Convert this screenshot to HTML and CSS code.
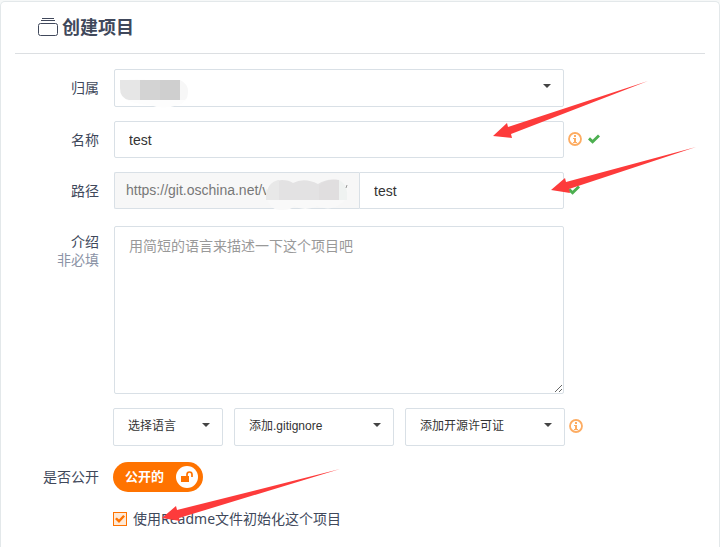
FILE: index.html
```html
<!DOCTYPE html>
<html lang="zh-CN">
<head>
  <meta charset="UTF-8" />
  <meta name="viewport" content="width=device-width, initial-scale=1.0"/>
  <title>创建项目</title>
  <link rel="stylesheet" href="styles.css">
</head>
<body>

  <!-- Shared icons -->
  <svg class="sprite" aria-hidden="true">
    <symbol id="icon-info" viewBox="0 0 14 14">
      <circle cx="7" cy="7" r="6" fill="none" stroke="currentColor" stroke-width="1.8"/>
      <path d="M6 3h2v2H6zM5 6h3v4h1v1H5v-1h1V7H5z" fill="currentColor"/>
    </symbol>
    <symbol id="icon-check" viewBox="0 0 12 10">
      <path d="M0 5.4L2 3.3l2.6 2.5L10 0.4l2 2L4.6 9.8z" fill="currentColor"/>
    </symbol>
  </svg>

  <main class="panel">
    <header class="panel-header">
      <svg class="title-icon" viewBox="0 0 20 19" aria-hidden="true">
        <path d="M4 .5h12M3 2.5h14" fill="none" stroke="currentColor"/>
        <rect x=".5" y="5.5" width="19" height="12" rx="2" fill="none" stroke="currentColor"/>
      </svg>
      <h1>创建项目</h1>
    </header>

    <form class="project-form">
      <div class="row">
        <label class="row-label" for="owner">归属</label>
        <div class="field select-box">
          <select id="owner" class="control">
            <option></option>
          </select>
          <svg class="mask mask-owner" viewBox="0 0 72 30" aria-hidden="true">
            <path d="M4 4C12-1 28 2 46 3Q68 6 70 16Q68 25 60 27Q45 32 32 27Q6 25 3 16Q0 8 4 4z" fill="#fdfdfd"/>
            <path d="M2 2h20v20H11Q2 20 2 10z" fill="#e6e6e6"/>
            <path d="M22 2h20v20H22z" fill="#d3d3d3"/>
            <path d="M42 2h20v20H42z" fill="#cfcfcf"/>
            <path d="M62 2q8 4 8 11t-3 9h-5z" fill="#f7f7f7"/>
          </svg>
        </div>
      </div>

      <div class="row">
        <label class="row-label" for="name">名称</label>
        <div class="field">
          <input type="text" id="name" class="control" value="test" />
        </div>
        <div class="hints">
          <svg class="icon-info"><use href="#icon-info"/></svg>
          <svg class="icon-check"><use href="#icon-check"/></svg>
        </div>
      </div>

      <div class="row">
        <label class="row-label" for="path">路径</label>
        <div class="field path-group">
          <span class="path-prefix">https://git.oschina.net/v
            <svg class="mask mask-path" viewBox="0 0 84 32" aria-hidden="true">
              <path d="M1 13Q2 31 16 31Q27 31 29 27Q40 33 52 27Q66 33 77 24Q84 18 82 8H2z" fill="#f9f9f9"/>
              <path d="M1 21Q1 2 17 1Q24 1 28 4Q39-2 53 5Q62-1 74 1V21H1z" fill="#e3e2e3"/>
              <path d="M1 21Q1 3 14 1V21H1z" fill="#e8e8e8"/>
              <path d="M54 6Q61 0 74 1V21H54z" fill="#e0dedf"/>
              <path d="M74 1Q82 5 82 14V21h-8z" fill="#eff2f1"/>
              <path d="M82 6l-1 3" stroke="#999"/>
            </svg>
          </span>
          <input type="text" id="path" class="control" value="test" />
        </div>
        <div class="hints">
          <svg class="icon-check"><use href="#icon-check"/></svg>
        </div>
      </div>

      <div class="row row-top">
        <label class="row-label" for="intro">介绍<small>非必填</small></label>
        <div class="field">
          <textarea id="intro" class="control" placeholder="用简短的语言来描述一下这个项目吧"></textarea>
        </div>
      </div>

      <div class="row">
        <span class="row-label"></span>
        <div class="options">
          <div class="select-box select-language">
            <select class="control" aria-label="选择语言"><option>选择语言</option></select>
          </div>
          <div class="select-box select-wide">
            <select class="control" aria-label="添加.gitignore"><option>添加.gitignore</option></select>
          </div>
          <div class="select-box select-wide">
            <select class="control" aria-label="添加开源许可证"><option>添加开源许可证</option></select>
          </div>
        </div>
        <div class="hints">
          <svg class="icon-info"><use href="#icon-info"/></svg>
        </div>
      </div>

      <div class="row row-public">
        <label class="row-label" for="public">是否公开</label>
        <button type="button" id="public" class="toggle">
          公开的
          <span class="toggle-knob">
            <svg viewBox="0 0 14 12" aria-hidden="true">
              <path d="M1 5h8v6H1z" fill="currentColor"/>
              <path d="M7 5.5V3.5a2.5 2.5 0 0 1 5 0V6" fill="none" stroke="currentColor" stroke-width="1.7"/>
            </svg>
          </span>
        </button>
      </div>

      <div class="row row-readme">
        <span class="row-label"></span>
        <label class="readme">
          <input type="checkbox" checked />
          使用Readme文件初始化这个项目
        </label>
      </div>
    </form>
  </main>

  <!-- Arrows drawn over the form -->
  <svg class="arrows" width="720" height="547" aria-hidden="true">
    <path d="M493 136L507 123L508 127L648 81L511 134L512 138z"/>
    <path d="M551 190L565 178L566 182L696 147L569 189L570 193z"/>
    <path d="M162 518L176 506L177 510L340 469L179 518L180 521z"/>
  </svg>

</body>
</html>
```

FILE: styles.css
```css
* {
  box-sizing: border-box;
}

body {
  margin: 0;
  padding-top: 1px;
  background: #f6f8f8;
  color: #40485b;
  font-family: "Liberation Sans", "Noto Sans CJK SC", sans-serif;
  font-size: 14px;
  line-height: 18px;
}

.sprite {
  display: none;
}

.panel {
  min-height: calc(100vh - 1px);
  padding: 0 14px;
  background: #fff;
  border: 1px solid #e3e8ea;
  border-bottom: 0;
  border-radius: 5px 5px 0 0;
}

.panel-header {
  display: flex;
  align-items: center;
  gap: 4px;
  height: 52px;
  padding-left: 23px;
  border-bottom: 1px solid #dcdfe2;
}

.panel-header h1 {
  margin: 0;
  font-size: 18px;
  line-height: 24px;
}

.title-icon {
  width: 20px;
  height: 19px;
}

.project-form {
  display: flex;
  flex-direction: column;
  gap: 14px;
  padding-top: 15px;
}

.row {
  display: flex;
  align-items: center;
}

.row-top {
  align-items: flex-start;
  padding-top: 3px;
}

.row-label {
  flex: none;
  width: 84px;
  margin-right: 14px;
  text-align: right;
}

.row-top .row-label {
  padding-top: 7px;
}

.row-label small {
  display: block;
  color: #8b93a6;
  font-size: 14px;
}

.field {
  flex: 0 1 450px;
  min-width: 0;
  margin-left: 1px;
}

.control {
  display: block;
  width: 100%;
  height: 37px;
  padding: 0 14px;
  background: #fff;
  border: 1px solid #d9e0e6;
  border-radius: 2px;
  color: #333;
  font: inherit;
  outline: none;
}

select.control {
  appearance: none;
  height: 38px;
  padding-bottom: 2px;
  font-size: 12px;
}

textarea.control {
  height: 168px;
  padding: 10px 14px;
}

.control::placeholder {
  color: #999;
}

.select-box {
  position: relative;
}

.select-box::after {
  content: "";
  position: absolute;
  top: 15px;
  right: 13px;
  border: 4px solid transparent;
  border-top-color: #444;
  border-bottom: 0;
  pointer-events: none;
}

.mask {
  position: absolute;
}

.mask-owner {
  top: 9px;
  left: 4px;
  width: 72px;
  height: 30px;
}

.path-group {
  display: flex;
}

.path-prefix {
  position: relative;
  flex: 0 0 245px;
  padding: 8px 11px;
  background: #f7f7f7;
  border: 1px solid #d9e0e6;
  border-right: 0;
  border-radius: 2px 0 0 2px;
  color: #777;
}

.mask-path {
  top: 6px;
  left: 150px;
  width: 84px;
  height: 32px;
}

.path-group .control {
  flex: 1;
  min-width: 0;
  border-radius: 0 2px 2px 0;
}

.hints {
  display: flex;
  align-items: center;
  gap: 6px;
  padding: 0 0 2px 4px;
}

.icon-info {
  width: 14px;
  height: 14px;
  color: #fdac62;
}

.icon-check {
  width: 12px;
  height: 10px;
  color: #4caf50;
}

.options {
  display: flex;
  flex: 0 1 452px;
  gap: 11px;
}

.select-language {
  flex: 110 1 0;
}

.select-wide {
  flex: 160 1 0;
}

.row-public {
  padding-top: 2px;
}

.toggle {
  display: flex;
  align-items: center;
  justify-content: space-between;
  width: 90px;
  height: 30px;
  padding: 0 5px 0 12px;
  background: #ff7300;
  border: 0;
  border-radius: 15px;
  color: #fff;
  font: inherit;
  font-size: 13px;
  font-weight: bold;
  cursor: pointer;
}

.toggle-knob {
  display: flex;
  align-items: center;
  justify-content: center;
  width: 22px;
  height: 22px;
  background: #fff;
  border-radius: 50%;
  color: #ff7300;
}

.toggle-knob svg {
  width: 14px;
  height: 12px;
}

.row-readme {
  padding-top: 4px;
}

.readme {
  display: flex;
  align-items: center;
  gap: 6px;
  font-family: "Noto Sans", "Noto Sans CJK SC", sans-serif;
}

.readme input {
  appearance: none;
  display: grid;
  place-items: center;
  width: 14px;
  height: 14px;
  margin: 0;
  background: #ffe9d6;
  border: 1px solid #ff7300;
}

.readme input:checked::before {
  content: "";
  width: 10px;
  height: 8px;
  background: #ff7300;
  clip-path: polygon(0 50%, 18% 30%, 40% 55%, 82% 0, 100% 20%, 40% 100%);
}

.arrows {
  position: absolute;
  top: 0;
  left: 0;
  fill: #fd3b3b;
  pointer-events: none;
}
```
